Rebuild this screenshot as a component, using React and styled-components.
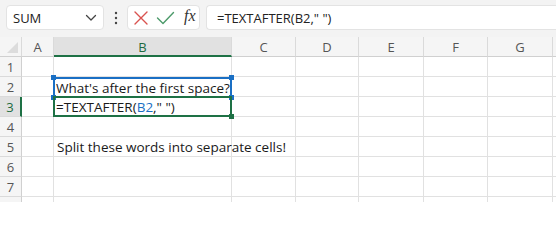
import React from "react";
import styled, { createGlobalStyle } from "styled-components";

const Global = createGlobalStyle`
  html, body { margin: 0; padding: 0; background: #ffffff; }
  body { font-family: "Open Sans", "Liberation Sans", sans-serif; overflow: hidden; }
`;

const Page = styled.div`
  width: 556px;
  height: 202px;
  display: flex;
  flex-direction: column;
  background: #ffffff;
  overflow: hidden;
`;

const Toolbar = styled.div`
  height: 37px;
  flex: none;
  box-sizing: border-box;
  background: #f3f3f3;
  display: flex;
  align-items: flex-start;
  padding: 5px 0 0 6px;
`;

const Box = styled.div`
  height: 25px;
  box-sizing: border-box;
  background: #ffffff;
  border: 1px solid #e3e3e3;
  border-radius: 4px;
  display: flex;
  align-items: center;
`;

const NameBox = styled(Box)`
  width: 98px;
  padding: 0 6px 0 6px;
  justify-content: space-between;
  font-size: 13px;
  color: #222;
`;

const Dots = styled.div`
  width: 23px;
  height: 25px;
  display: flex;
  align-items: center;
  justify-content: center;
`;

const ButtonGroup = styled(Box)`
  width: 73px;
  padding: 0 0 0 5px;
  gap: 7px;
`;

const Fx = styled.span`
  font-family: "Liberation Serif", "DejaVu Serif", serif;
  font-style: italic;
  font-size: 16px;
  color: #333;
  margin-top: -3px;
  margin-left: 2px;
`;

const FormulaBox = styled(Box)`
  flex: 1;
  margin-left: 6px;
  border-right: none;
  border-radius: 4px 0 0 4px;
  padding-left: 10px;
  font-size: 13px;
  color: #222;
`;

const COLS = [22, 32, 178, 64, 63, 65, 64, 65, 20];

const Grid = styled.div`
  display: grid;
  grid-template-columns: ${COLS.map((c) => c + "px").join(" ")};
  grid-template-rows: 20px;
  grid-auto-rows: 20px;
`;

const Corner = styled.div`
  background: #f5f5f5;
  border-right: 1px solid #dadada;
  border-bottom: 1px solid #d0d0d0;
  box-sizing: border-box;
  position: relative;
  &::after {
    content: "";
    position: absolute;
    right: 3px;
    bottom: 3px;
    width: 0;
    height: 0;
    border-left: 11px solid transparent;
    border-bottom: 11px solid #dcdcdc;
  }
`;

const ColHead = styled.div`
  box-sizing: border-box;
  background: ${(p) => (p.$active ? "#e1e1e1" : "#f5f5f5")};
  border-right: 1px solid #dadada;
  border-bottom: ${(p) => (p.$active ? "2px solid #1e7145" : "1px solid #d0d0d0")};
  display: flex;
  align-items: center;
  justify-content: center;
  font-size: 13px;
  color: ${(p) => (p.$active ? "#1e6b41" : "#555")};
  padding-top: ${(p) => (p.$active ? "1px" : "0")};
`;

const RowHead = styled.div`
  box-sizing: border-box;
  background: ${(p) => (p.$active ? "#e1e1e1" : "#f5f5f5")};
  border-right: ${(p) => (p.$active ? "2px solid #1e7145" : "1px solid #d0d0d0")};
  border-bottom: 1px solid #dadada;
  display: flex;
  align-items: center;
  justify-content: center;
  font-size: 13px;
  color: ${(p) => (p.$active ? "#1e6b41" : "#555")};
`;

const Cell = styled.div`
  box-sizing: border-box;
  border-right: 1px solid #e1e1e1;
  border-bottom: 1px solid #e1e1e1;
  font-size: 13.5px;
  color: #1a1a1a;
  white-space: nowrap;
  display: flex;
  align-items: center;
  padding-left: 3px;
  position: relative;
`;

const RefCell = styled(Cell)`
  border: 2px solid #1a6fc4;
  border-bottom: none;
  padding-left: 1px;
  margin-left: -1px;
  z-index: 2;
`;

const EditCell = styled(Cell)`
  border: 2px solid #1e7145;
  padding-left: 1px;
  margin-left: -1px;
  margin-top: -1px;
  height: 21px;
  z-index: 3;
`;

const Handle = styled.span`
  position: absolute;
  width: 5px;
  height: 5px;
  background: ${(p) => p.$color};
  ${(p) => p.$pos}
`;

const Blue = styled.span`
  color: #1a6fc4;
`;

function XIcon() {
  return (
    <svg width="16" height="16" viewBox="0 0 16 16">
      <path d="M2 2 L14 14 M14 2 L2 14" stroke="#d9534f" strokeWidth="1.4" fill="none" strokeLinecap="round" />
    </svg>
  );
}

function CheckIcon() {
  return (
    <svg width="19" height="16" viewBox="0 0 19 16">
      <path d="M1.5 8 L7 13.5 L17.5 2.5" stroke="#4c9a6a" strokeWidth="1.4" fill="none" strokeLinecap="round" strokeLinejoin="round" />
    </svg>
  );
}

function Chevron() {
  return (
    <svg width="12" height="8" viewBox="0 0 12 8">
      <path d="M1.5 1.5 L6 6 L10.5 1.5" stroke="#444" strokeWidth="1.3" fill="none" strokeLinecap="round" strokeLinejoin="round" />
    </svg>
  );
}

function VDots() {
  return (
    <svg width="4" height="14" viewBox="0 0 4 14">
      <circle cx="2" cy="2" r="1.2" fill="#444" />
      <circle cx="2" cy="7" r="1.2" fill="#444" />
      <circle cx="2" cy="12" r="1.2" fill="#444" />
    </svg>
  );
}

const LETTERS = ["A", "B", "C", "D", "E", "F", "G", ""];

export default function App() {
  const rows = [1, 2, 3, 4, 5, 6, 7, 8];
  return (
    <Page>
      <Global />
      <Toolbar>
        <NameBox>
          <span>SUM</span>
          <Chevron />
        </NameBox>
        <Dots>
          <VDots />
        </Dots>
        <ButtonGroup>
          <XIcon />
          <CheckIcon />
          <Fx>fx</Fx>
        </ButtonGroup>
        <FormulaBox>=TEXTAFTER(B2," ")</FormulaBox>
      </Toolbar>
      <Grid>
        <Corner />
        {LETTERS.map((l, i) => (
          <ColHead key={i} $active={l === "B"}>
            {l}
          </ColHead>
        ))}
        {rows.map((r) => (
          <React.Fragment key={r}>
            <RowHead $active={r === 3}>{r < 8 ? r : ""}</RowHead>
            {LETTERS.map((l, i) => {
              if (r === 2 && l === "B") {
                return (
                  <RefCell key={i}>
                    What's after the first space?
                    <Handle $color="#1a6fc4" $pos="left:-4px; top:-4px;" />
                    <Handle $color="#1a6fc4" $pos="right:-4px; top:-4px;" />
                    <Handle $color="#1a6fc4" $pos="left:-4px; bottom:-3px; z-index:5;" />
                    <Handle $color="#1a6fc4" $pos="right:-4px; bottom:-3px; z-index:5;" />
                  </RefCell>
                );
              }
              if (r === 3 && l === "B") {
                return (
                  <EditCell key={i}>
                    =TEXTAFTER(<Blue>B2</Blue>," ")
                    <Handle $color="#1e7145" $pos="right:-4px; bottom:-4px;" />
                  </EditCell>
                );
              }
              if (r === 5 && l === "B") {
                return <Cell key={i}>Split these words into separate cells!</Cell>;
              }
              return <Cell key={i} />;
            })}
          </React.Fragment>
        ))}
      </Grid>
    </Page>
  );
}
